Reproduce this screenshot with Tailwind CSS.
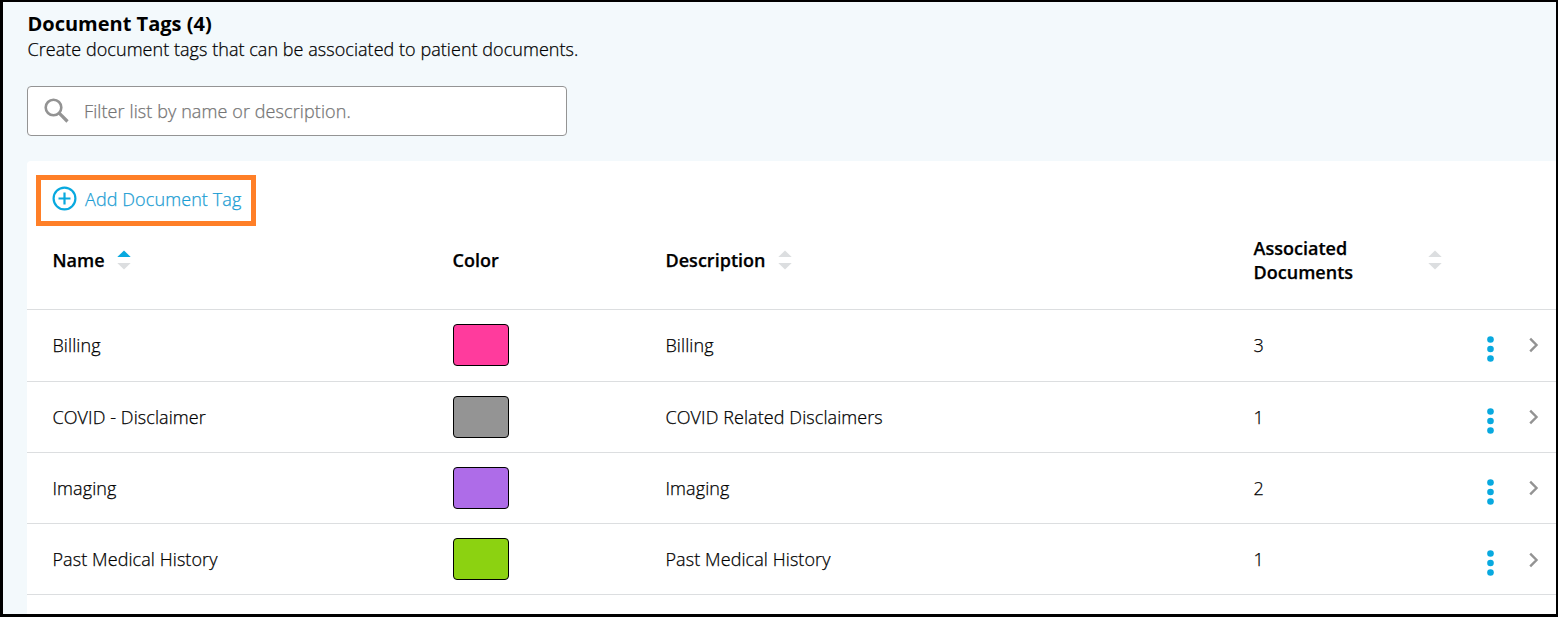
<!DOCTYPE html>
<html lang="en">
<head>
<meta charset="utf-8">
<title>Document Tags</title>
<script src="https://cdn.jsdelivr.net/npm/@tailwindcss/browser@4"></script>
</head>
<body class="h-[617px] w-[1558px] overflow-hidden font-['Open_Sans',sans-serif] text-[18px] leading-6 font-light tracking-[0.08px] text-black [-webkit-text-stroke:0.25px]">
<svg class="hidden">
  <symbol id="sort" viewBox="0 0 14 20"><path d="M0.3 7 7 0.5 13.700 7z" fill="var(--up,#dcdee0)"/><path d="M0.300 13 7 19.500 13.700 13z" fill="#dcdee0"/></symbol>
  <symbol id="dots" viewBox="0 0 8 26"><g fill="#08a9df"><circle cx="3.500" cy="3.500" r="3.300"/><circle cx="3.500" cy="13" r="3.300"/><circle cx="3.500" cy="22.500" r="3.300"/></g></symbol>
  <symbol id="chev" viewBox="0 0 10 16"><path d="M1.200 1.700 7.500 8 1.200 14.300" fill="none" stroke="#939393" stroke-width="2.400"/></symbol>
</svg>
<div class="flex h-full flex-col border-t-2 border-r-2 border-b-3 border-l-3 border-black bg-[#f3f9fc] pl-6">
  <header class="pt-2.5">
    <h1 class="h-6 pl-[0.500px] text-[20px] font-bold tracking-normal [-webkit-text-stroke:0]">Document Tags (4)</h1>
    <p class="mt-px h-6 pl-[0.500px] tracking-[0.045px]">Create document tags that can be associated to patient documents.</p>
    <label class="mt-[25px] flex h-[50px] w-[540px] items-center rounded border border-[#949494] bg-white pl-4 text-[#757575]">
      <svg class="size-[26px] shrink-0" viewBox="0 0 26 26" fill="none" stroke="#939393"><circle cx="9.500" cy="9.500" r="7.800" stroke-width="2.600"/><path d="m15.200 15.200 8.300 8.300" stroke-width="3.200"/></svg>
      <span class="ml-3.5 tracking-[0.1px]">Filter list by name or description.</span>
    </label>
  </header>
  <main class="mt-[25px] flex-1 rounded-tl bg-white">
    <div class="h-[65px] pt-[14px] pl-[9px]">
      <button class="flex h-[51px] w-[220px] items-center border-5 border-[#ff7f27] pl-[11px] text-[#1b9dd3]">
        <svg class="-mt-1 size-[26px]" viewBox="0 0 26 26" fill="none" stroke="#08a9df" stroke-width="2.200"><circle cx="12.500" cy="12.500" r="10.900"/><path d="M12.500 6.500v12M6.500 12.500h12"/></svg>
        <span class="-mt-[3px] ml-[7px] tracking-[0.1px] whitespace-nowrap">Add Document Tag</span>
      </button>
    </div>
    <div class="grid h-[84px] grid-cols-[400px_213px_588px_1fr] items-center border-b border-[#dcdee0] pb-4 pl-[25.500px] font-semibold tracking-[0.02px]">
      <div class="flex items-center gap-3"><span>Name</span><svg class="h-5 w-3.5 [--up:#08a9df]"><use href="#sort"/></svg></div>
      <div>Color</div>
      <div class="flex items-center gap-3"><span>Description</span><svg class="h-5 w-3.5"><use href="#sort"/></svg></div>
      <div class="flex items-center"><span class="w-[174px]">Associated<br>Documents</span><svg class="h-5 w-3.5"><use href="#sort"/></svg></div>
    </div>
    <div class="grid h-[72px] grid-cols-[400px_213px_588px_1fr] items-center border-b border-[#dcdee0] pb-px pl-[25.500px]">
      <span>Billing</span><i class="h-[42px] w-14 rounded border border-black bg-[#ff3b9d]"></i><span>Billing</span>
      <div class="flex items-center"><span class="w-[233px]">3</span><svg class="mt-[8px] h-[26px] w-2"><use href="#dots"/></svg><svg class="ml-[34.500px] h-4 w-2.5"><use href="#chev"/></svg></div>
    </div>
    <div class="grid h-[71px] grid-cols-[400px_213px_588px_1fr] items-center border-b border-[#dcdee0] pl-[25.500px]">
      <span>COVID - Disclaimer</span><i class="h-[42px] w-14 rounded border border-black bg-[#949494]"></i><span>COVID Related Disclaimers</span>
      <div class="flex items-center"><span class="w-[233px]">1</span><svg class="mt-[8px] h-[26px] w-2"><use href="#dots"/></svg><svg class="-mt-px ml-[34.500px] h-4 w-2.5"><use href="#chev"/></svg></div>
    </div>
    <div class="grid h-[71px] grid-cols-[400px_213px_588px_1fr] items-center border-b border-[#dcdee0] pl-[25.500px]">
      <span>Imaging</span><i class="h-[42px] w-14 rounded border border-black bg-[#ae6ce8]"></i><span>Imaging</span>
      <div class="flex items-center"><span class="w-[233px]">2</span><svg class="mt-[8px] h-[26px] w-2"><use href="#dots"/></svg><svg class="-mt-px ml-[34.500px] h-4 w-2.5"><use href="#chev"/></svg></div>
    </div>
    <div class="grid h-[71px] grid-cols-[400px_213px_588px_1fr] items-center border-b border-[#dcdee0] pl-[25.500px]">
      <span>Past Medical History</span><i class="h-[42px] w-14 rounded border border-black bg-[#8cd211]"></i><span>Past Medical History</span>
      <div class="flex items-center"><span class="w-[233px]">1</span><svg class="mt-[8px] h-[26px] w-2"><use href="#dots"/></svg><svg class="mt-px ml-[34.500px] h-4 w-2.5"><use href="#chev"/></svg></div>
    </div>
  </main>
</div>
</body>
</html>
